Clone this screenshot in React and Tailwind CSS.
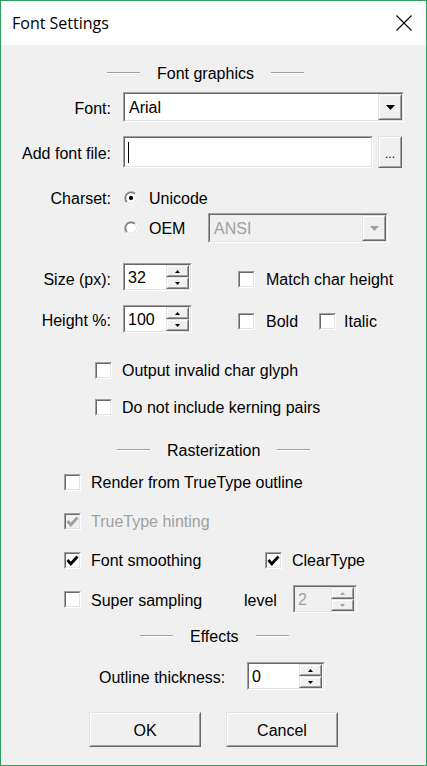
// Font Settings dialog (Windows 10 style, classic 3D controls)
import React from 'react';

// sunken 3D frame (edit boxes, combos, checkboxes)
function Sunken({ className = '', inner = '', children }) {
  return (
    <div className={`border border-t-[#a0a0a0] border-l-[#a0a0a0] border-b-white border-r-white ${className}`}>
      <div className={`h-full w-full border border-t-[#696969] border-l-[#696969] border-b-[#e3e3e3] border-r-[#e3e3e3] ${inner}`}>
        {children}
      </div>
    </div>
  );
}

// raised 3D frame (buttons)
function Raised({ className = '', inner = '', children }) {
  return (
    <div className={`border border-t-[#e3e3e3] border-l-[#e3e3e3] border-b-[#696969] border-r-[#696969] ${className}`}>
      <div className={`h-full w-full border border-t-white border-l-white border-b-[#a0a0a0] border-r-[#a0a0a0] bg-[#f0f0f0] ${inner}`}>
        {children}
      </div>
    </div>
  );
}

function Arrow({ up = false, color = '#000', w = 9, h = 5 }) {
  return (
    <svg width={w} height={h} viewBox={`0 0 ${w} ${h}`}>
      {up ? (
        <polygon points={`0,${h} ${w},${h} ${w / 2},0`} fill={color} />
      ) : (
        <polygon points={`0,0 ${w},0 ${w / 2},${h}`} fill={color} />
      )}
    </svg>
  );
}

function Combo({ text, width, disabled = false }) {
  return (
    <Sunken
      className={`${width} h-[30px]`}
      inner={`flex items-stretch ${disabled ? 'bg-[#f0f0f0]' : 'bg-white'}`}
    >
      <div className={`flex flex-1 items-center pl-[4px] pt-[2px] ${disabled ? 'text-[#a0a0a0]' : ''}`}>{text}</div>
      <Raised className="w-[24px]" inner="flex items-center justify-center">
        <Arrow color={disabled ? '#a0a0a0' : '#000'} />
      </Raised>
    </Sunken>
  );
}

function Spin({ value, width, disabled = false }) {
  const c = disabled ? '#a0a0a0' : '#000';
  return (
    <Sunken
      className={`${width} h-[28px]`}
      inner={`flex items-stretch ${disabled ? 'bg-[#f0f0f0]' : 'bg-white'}`}
    >
      <div className={`flex flex-1 items-center pl-[3px] pt-[2px] ${disabled ? 'text-[#a0a0a0]' : ''}`}>{value}</div>
      <div className="mr-px flex w-[23px] flex-col">
        <Raised className="flex-1" inner="flex items-center justify-center">
          <Arrow up color={c} w={5} h={3} />
        </Raised>
        <Raised className="flex-1" inner="flex items-center justify-center">
          <Arrow color={c} w={5} h={3} />
        </Raised>
      </div>
    </Sunken>
  );
}

function Check({ checked = false, disabled = false }) {
  return (
    <Sunken
      className="h-[17px] w-[17px] shrink-0"
      inner={`flex items-center justify-center ${disabled ? 'bg-[#f0f0f0]' : 'bg-white'}`}
    >
      {checked && (
        <svg width="13" height="13" viewBox="0 0 13 13">
          <polyline
            points="1.5,6 4.8,9.8 11.5,2.5"
            fill="none"
            stroke={disabled ? '#a0a0a0' : '#000'}
            strokeWidth="2.8"
          />
        </svg>
      )}
    </Sunken>
  );
}

function Radio({ checked = false }) {
  return (
    <svg width="14" height="14" viewBox="0 0 13 13" className="shrink-0">
      <circle cx="6.5" cy="6.5" r="5.5" fill="#fff" />
      <path d="M2.26 10.74 A6 6 0 0 1 10.74 2.26" fill="none" stroke="#a0a0a0" />
      <path d="M10.74 2.26 A6 6 0 0 1 2.26 10.74" fill="none" stroke="#fff" />
      <path d="M2.96 10.04 A5 5 0 0 1 10.04 2.96" fill="none" stroke="#696969" />
      <path d="M10.04 2.96 A5 5 0 0 1 2.96 10.04" fill="none" stroke="#e3e3e3" />
      {checked && <circle cx="6.5" cy="6.5" r="2" fill="#000" />}
    </svg>
  );
}

// etched separator line
function Line() {
  return <div className="h-[2px] w-[33px] border-t border-b border-t-[#a0a0a0] border-b-white" />;
}

function Header({ text, offset }) {
  return (
    <div className={`flex h-[18px] items-center gap-[17px] ${offset}`}>
      <Line />
      <span className="pt-[2px]">{text}</span>
      <Line />
    </div>
  );
}

function CheckRow({ label, checked, disabled, offset }) {
  return (
    <div className={`flex h-[20px] items-center ${offset}`}>
      <Check checked={checked} disabled={disabled} />
      <span className={`ml-[10px] pt-[2px] ${disabled ? 'text-[#a0a0a0]' : ''}`}>{label}</span>
    </div>
  );
}

export default function App() {
  return (
    <div className="flex h-[766px] w-[427px] flex-col border border-[#2f9e5a] bg-[#f0f0f0] font-['Liberation_Sans',Arial,sans-serif] text-[16px] leading-[18px] text-black">
      {/* barre de titre */}
      <div className="flex h-[44px] shrink-0 items-center justify-between bg-white pl-[11px] pr-[14px]">
        <span className="font-['Open_Sans',sans-serif] text-[16px]">Font Settings</span>
        <svg width="16" height="16" viewBox="0 0 16 16">
          <path d="M0.5 0.5 L15.5 15.5 M15.5 0.5 L0.5 15.5" stroke="#000" strokeWidth="1.1" />
        </svg>
      </div>

      <div className="flex flex-col">
        <div className="mt-[19px]">
          <Header text="Font graphics" offset="ml-[106px]" />
        </div>

        {/* Font */}
        <div className="mt-[10px] flex h-[30px] items-center">
          <span className="w-[110px] pt-[3px] text-right">Font:</span>
          <div className="ml-[12px]">
            <Combo text="Arial" width="w-[281px]" />
          </div>
        </div>

        {/* Add font file */}
        <div className="mt-[14px] flex h-[32px] items-center">
          <span className="w-[110px] pt-[3px] text-right">Add font file:</span>
          <Sunken className="ml-[12px] h-[32px] w-[250px]" inner="flex items-center bg-white pl-[3px]">
            <div className="h-[21px] w-px bg-black" />
          </Sunken>
          <Raised className="ml-[5px] h-[32px] w-[24px]" inner="flex items-end justify-center pb-[6px] text-[12px] leading-[12px]">
            ...
          </Raised>
        </div>

        {/* Charset */}
        <div className="mt-[20px] flex h-[20px] items-center">
          <span className="w-[110px] pt-[2px] text-right">Charset:</span>
          <div className="ml-[13px]">
            <Radio checked />
          </div>
          <span className="ml-[11px] pt-[2px]">Unicode</span>
        </div>
        <div className="mt-[5px] flex h-[30px] items-center">
          <div className="ml-[123px] flex w-[84px] items-center">
            <Radio />
            <span className="ml-[11px] pt-[2px]">OEM</span>
          </div>
          <Combo text="ANSI" width="w-[180px]" disabled />
        </div>

        {/* Size */}
        <div className="mt-[20px] flex h-[28px] items-center">
          <span className="w-[110px] pt-[5px] text-right">Size (px):</span>
          <div className="ml-[12px]">
            <Spin value="32" width="w-[69px]" />
          </div>
          <div className="ml-[46px] flex items-center pt-[4px]">
            <Check />
            <span className="ml-[11px] pt-[2px]">Match char height</span>
          </div>
        </div>

        {/* Height */}
        <div className="mt-[14px] flex h-[28px] items-center">
          <span className="w-[110px] pt-[4px] text-right">Height %:</span>
          <div className="ml-[12px]">
            <Spin value="100" width="w-[69px]" />
          </div>
          <div className="ml-[46px] flex items-center pt-[4px]">
            <div className="flex w-[81px] items-center">
              <Check />
              <span className="ml-[11px] pt-[2px]">Bold</span>
            </div>
            <Check />
            <span className="ml-[8px] pt-[2px]">Italic</span>
          </div>
        </div>

        <div className="mt-[27px]">
          <CheckRow label="Output invalid char glyph" offset="ml-[94px]" />
        </div>
        <div className="mt-[17px]">
          <CheckRow label="Do not include kerning pairs" offset="ml-[94px]" />
        </div>

        <div className="mt-[24px]">
          <Header text="Rasterization" offset="ml-[116px]" />
        </div>

        <div className="mt-[13px]">
          <CheckRow label="Render from TrueType outline" offset="ml-[63px]" />
        </div>
        <div className="mt-[19px]">
          <CheckRow label="TrueType hinting" checked disabled offset="ml-[63px]" />
        </div>

        <div className="mt-[19px] flex h-[20px] items-center">
          <div className="ml-[63px] flex w-[201px] items-center">
            <Check checked />
            <span className="ml-[10px] pt-[2px]">Font smoothing</span>
          </div>
          <Check checked />
          <span className="ml-[10px] pt-[2px]">ClearType</span>
        </div>

        <div className="mt-[15px] flex h-[28px] items-center">
          <div className="ml-[63px] flex w-[180px] items-center pt-[1px]">
            <Check />
            <span className="ml-[10px] pt-[2px]">Super sampling</span>
          </div>
          <span className="w-[49px] pt-[3px]">level</span>
          <Spin value="2" width="w-[64px]" disabled />
        </div>

        <div className="mt-[14px]">
          <Header text="Effects" offset="ml-[139px]" />
        </div>

        <div className="mt-[17px] flex h-[28px] items-center">
          <span className="ml-[98px] w-[148px] pt-[3px]">Outline thickness:</span>
          <Spin value="0" width="w-[78px]" />
        </div>

        {/* boutons */}
        <div className="mt-[22px] flex h-[35px]">
          <Raised className="ml-[88px] w-[112px]" inner="flex items-center justify-center pt-[2px]">
            OK
          </Raised>
          <Raised className="ml-[25px] w-[112px]" inner="flex items-center justify-center pt-[2px]">
            Cancel
          </Raised>
        </div>
      </div>
    </div>
  );
}
